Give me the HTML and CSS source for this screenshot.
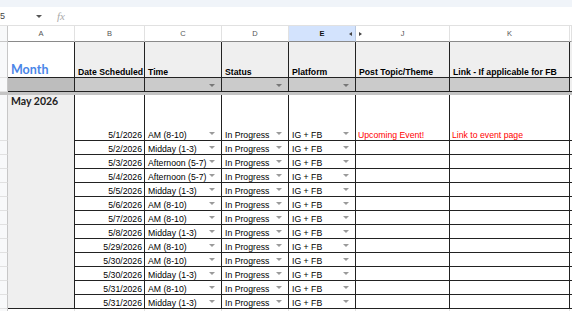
FILE: index.html
```html
<!DOCTYPE html>
<html lang="en">
<head>
    <meta charset="UTF-8">
    <meta name="viewport" content="width=device-width, initial-scale=1.0">
    <title>Content Calendar</title>
    <link rel="stylesheet" href="styles.css">
</head>
<body>
    <div class="toolbar-strip"></div>
    <div class="formula-bar">
        <span class="name-box">5</span>
        <span class="caret"></span>
        <span class="fx">fx</span>
    </div>

    <div class="sheet">
        <!-- column letters -->
        <div class="corner"></div>
        <div class="colhead">A</div>
        <div class="colhead">B</div>
        <div class="colhead">C</div>
        <div class="colhead">D</div>
        <div class="colhead selected">E<span class="hide-left"></span></div>
        <div class="colhead"><span class="hide-right"></span>J</div>
        <div class="colhead">K</div>
        <div class="colhead"></div>

        <!-- header row -->
        <div class="rownum"></div>
        <div class="cell title">Month</div>
        <div class="cell head">Date Scheduled</div>
        <div class="cell head">Time</div>
        <div class="cell head">Status</div>
        <div class="cell head">Platform</div>
        <div class="cell head">Post Topic/Theme</div>
        <div class="cell head">Link - If applicable for FB</div>
        <div class="cell head-end"></div>

        <!-- filter row -->
        <div class="rownum"></div>
        <div class="cell filter dark"></div>
        <div class="cell filter"></div>
        <div class="cell filter"><span class="arrow"></span></div>
        <div class="cell filter"><span class="arrow"></span></div>
        <div class="cell filter"><span class="arrow"></span></div>
        <div class="cell filter"></div>
        <div class="cell filter"></div>
        <div class="cell head-end"></div>

        <div class="freeze"></div>

        <!-- data -->
        <div class="rownum"></div>
        <div class="cell month">May 2026</div>
        <div class="cell date">5/1/2026</div>
        <div class="cell chip">AM (8-10)<span class="arrow"></span></div>
        <div class="cell chip">In Progress<span class="arrow"></span></div>
        <div class="cell chip">IG + FB<span class="arrow"></span></div>
        <div class="cell red">Upcoming Event!</div>
        <div class="cell red">Link to event page</div>
        <div class="cell blank"></div>

        <div class="rownum"></div>
        <div class="cell date">5/2/2026</div>
        <div class="cell chip">Midday (1-3)<span class="arrow"></span></div>
        <div class="cell chip">In Progress<span class="arrow"></span></div>
        <div class="cell chip">IG + FB<span class="arrow"></span></div>
        <div class="cell"></div>
        <div class="cell"></div>
        <div class="cell blank"></div>

        <div class="rownum"></div>
        <div class="cell date">5/3/2026</div>
        <div class="cell chip">Afternoon (5-7)<span class="arrow"></span></div>
        <div class="cell chip">In Progress<span class="arrow"></span></div>
        <div class="cell chip">IG + FB<span class="arrow"></span></div>
        <div class="cell"></div>
        <div class="cell"></div>
        <div class="cell blank"></div>

        <div class="rownum"></div>
        <div class="cell date">5/4/2026</div>
        <div class="cell chip">Afternoon (5-7)<span class="arrow"></span></div>
        <div class="cell chip">In Progress<span class="arrow"></span></div>
        <div class="cell chip">IG + FB<span class="arrow"></span></div>
        <div class="cell"></div>
        <div class="cell"></div>
        <div class="cell blank"></div>

        <div class="rownum"></div>
        <div class="cell date">5/5/2026</div>
        <div class="cell chip">Midday (1-3)<span class="arrow"></span></div>
        <div class="cell chip">In Progress<span class="arrow"></span></div>
        <div class="cell chip">IG + FB<span class="arrow"></span></div>
        <div class="cell"></div>
        <div class="cell"></div>
        <div class="cell blank"></div>

        <div class="rownum"></div>
        <div class="cell date">5/6/2026</div>
        <div class="cell chip">AM (8-10)<span class="arrow"></span></div>
        <div class="cell chip">In Progress<span class="arrow"></span></div>
        <div class="cell chip">IG + FB<span class="arrow"></span></div>
        <div class="cell"></div>
        <div class="cell"></div>
        <div class="cell blank"></div>

        <div class="rownum"></div>
        <div class="cell date">5/7/2026</div>
        <div class="cell chip">AM (8-10)<span class="arrow"></span></div>
        <div class="cell chip">In Progress<span class="arrow"></span></div>
        <div class="cell chip">IG + FB<span class="arrow"></span></div>
        <div class="cell"></div>
        <div class="cell"></div>
        <div class="cell blank"></div>

        <div class="rownum"></div>
        <div class="cell date">5/8/2026</div>
        <div class="cell chip">Midday (1-3)<span class="arrow"></span></div>
        <div class="cell chip">In Progress<span class="arrow"></span></div>
        <div class="cell chip">IG + FB<span class="arrow"></span></div>
        <div class="cell"></div>
        <div class="cell"></div>
        <div class="cell blank"></div>

        <div class="rownum"></div>
        <div class="cell date">5/29/2026</div>
        <div class="cell chip">AM (8-10)<span class="arrow"></span></div>
        <div class="cell chip">In Progress<span class="arrow"></span></div>
        <div class="cell chip">IG + FB<span class="arrow"></span></div>
        <div class="cell"></div>
        <div class="cell"></div>
        <div class="cell blank"></div>

        <div class="rownum"></div>
        <div class="cell date">5/30/2026</div>
        <div class="cell chip">AM (8-10)<span class="arrow"></span></div>
        <div class="cell chip">In Progress<span class="arrow"></span></div>
        <div class="cell chip">IG + FB<span class="arrow"></span></div>
        <div class="cell"></div>
        <div class="cell"></div>
        <div class="cell blank"></div>

        <div class="rownum"></div>
        <div class="cell date">5/30/2026</div>
        <div class="cell chip">Midday (1-3)<span class="arrow"></span></div>
        <div class="cell chip">In Progress<span class="arrow"></span></div>
        <div class="cell chip">IG + FB<span class="arrow"></span></div>
        <div class="cell"></div>
        <div class="cell"></div>
        <div class="cell blank"></div>

        <div class="rownum"></div>
        <div class="cell date">5/31/2026</div>
        <div class="cell chip">AM (8-10)<span class="arrow"></span></div>
        <div class="cell chip">In Progress<span class="arrow"></span></div>
        <div class="cell chip">IG + FB<span class="arrow"></span></div>
        <div class="cell"></div>
        <div class="cell"></div>
        <div class="cell blank"></div>

        <div class="rownum"></div>
        <div class="cell date">5/31/2026</div>
        <div class="cell chip">Midday (1-3)<span class="arrow"></span></div>
        <div class="cell chip">In Progress<span class="arrow"></span></div>
        <div class="cell chip">IG + FB<span class="arrow"></span></div>
        <div class="cell"></div>
        <div class="cell"></div>
        <div class="cell blank"></div>

        <!-- next (empty) row -->
        <div class="rownum"></div>
        <div class="cell empty"></div>
        <div class="cell empty"></div>
        <div class="cell empty"></div>
        <div class="cell empty"></div>
        <div class="cell empty"></div>
        <div class="cell empty"></div>
        <div class="cell empty"></div>
        <div class="cell empty"></div>
    </div>
</body>
</html>
```

FILE: styles.css
```css
body {
    margin: 0;
    width: 572px;
    height: 311px;
    overflow: hidden;
    background-color: #fff;
    font-family: "Liberation Sans", Arial, sans-serif;
}

.toolbar-strip {
    height: 7px;
    background-color: #f0f4f9;
}

.formula-bar {
    height: 19px;
    box-sizing: border-box;
    border-bottom: 1px solid #e1e1e1;
    display: flex;
    align-items: center;
    font-size: 9px;
    color: #444;
}

.name-box {
    width: 36px;
}

.caret {
    width: 0;
    height: 0;
    border-left: 3px solid transparent;
    border-right: 3px solid transparent;
    border-top: 3px solid #555;
}

.fx {
    margin-left: 15px;
    font-family: "Liberation Serif", serif;
    font-style: italic;
    font-size: 11px;
    color: #aaa;
}

.sheet {
    display: grid;
    grid-template-columns: 8px 67px 70px 77px 67px 67px 94px 120px 2px;
    grid-template-rows: 16px 36px 14px 3px 46px repeat(12, 14px) 14px;
    font-size: 8.7px;
    color: #000;
}

.sheet > div {
    box-sizing: border-box;
}

/* column letters */
.corner {
    background-color: #f8f9fa;
    border-right: 1px solid #c7c7c7;
    border-bottom: 1px solid #c7c7c7;
}

.colhead {
    display: flex;
    align-items: center;
    justify-content: center;
    position: relative;
    border-right: 1px solid #e1e1e1;
    border-bottom: 1px solid #8a8a8a;
    font-size: 7.5px;
    color: #555;
}

.colhead.selected {
    background-color: #d3e3fd;
    color: #111;
    font-weight: bold;
    border-right: 1px solid #b8c8e0;
}

.hide-left,
.hide-right {
    position: absolute;
    top: 6px;
    width: 0;
    height: 0;
    border-top: 2px solid transparent;
    border-bottom: 2px solid transparent;
}

.hide-left {
    right: 3px;
    border-right: 3px solid #444;
}

.hide-right {
    left: 3px;
    border-left: 3px solid #444;
}

.rownum {
    background-color: #f8f9fa;
    border-right: 1px solid #c7c7c7;
    border-bottom: 1px solid #e1e1e1;
}

/* cells */
.cell {
    display: flex;
    align-items: flex-end;
    padding: 0 2px;
    line-height: 1.05;
    border-right: 1px solid #222;
    border-bottom: 1px solid #222;
    white-space: nowrap;
    overflow: hidden;
}

.title {
    font-family: Lato, "Liberation Sans", sans-serif;
    font-weight: bold;
    font-size: 12.5px;
    color: #4a86e8;
    padding-left: 3px;
    padding-bottom: 1px;
}

.head {
    background-color: #efefef;
    font-weight: bold;
    padding-left: 3px;
}

.head-end {
    background-color: #efefef;
    border-bottom: 1px solid #222;
}

.filter {
    background-color: #cbcbcb;
    justify-content: flex-end;
}

.filter.dark {
    background-color: #bdbdbd;
}

.freeze {
    grid-column: 1 / -1;
    background-color: #c4c4c4;
}

.month {
    grid-row: span 13;
    align-items: flex-start;
    padding: 0 3px;
    line-height: 1.2;
    background-color: #efefef;
    font-family: Lato, "Liberation Sans", sans-serif;
    font-weight: bold;
    font-size: 10.5px;
    color: #222;
}

.date {
    justify-content: flex-end;
}

.chip {
    justify-content: space-between;
    padding-left: 3px;
}

.arrow {
    align-self: flex-end;
    margin: 0 4px 5px 0;
    width: 0;
    height: 0;
    border-left: 3px solid transparent;
    border-right: 3px solid transparent;
    border-top: 3px solid #9a9a9a;
}

.filter .arrow {
    margin-bottom: 4px;
    border-top-color: #777;
}

.red {
    color: #ff0000;
}

.blank {
    border-right: none;
}

.empty {
    border-right: 1px solid #e1e1e1;
    border-bottom: none;
}
```
